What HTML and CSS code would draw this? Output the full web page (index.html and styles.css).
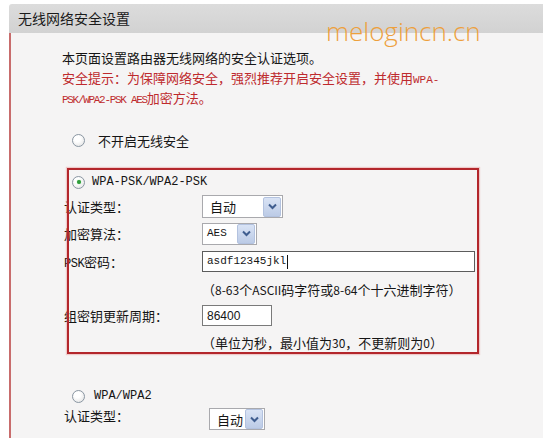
FILE: index.html
```html
<!DOCTYPE html>
<html>
<head>
    <meta charset="utf-8">
    <title>无线网络安全设置</title>
    <link rel="stylesheet" href="styles.css">
</head>
<body>
<div class="page">
    <div class="panel">
        <div class="panel-title">无线网络安全设置</div>
        <div class="panel-body">
            <p class="intro">
                本页面设置路由器无线网络的安全认证选项。<br>
                <span class="warn">安全提示：为保障网络安全，强烈推荐开启安全设置，并使用<span class="en">WPA-</span><br><span class="en narrow">PSK/WPA2-PSK AES</span>加密方法。</span>
            </p>

            <label class="option option-off">
                <span class="radio"></span>
                <span>不开启无线安全</span>
            </label>

            <label class="option option-psk">
                <span class="radio checked"></span>
                <span class="en">WPA-PSK/WPA2-PSK</span>
            </label>

            <div class="form form-psk">
                <div class="label">认证类型：</div>
                <div class="cell">
                    <div class="select select-auth">
                        <span class="value">自动</span>
                        <span class="btn"><svg width="11" height="11" viewBox="0 0 11 11"><polyline points="2,3.5 5.5,7 9,3.5" fill="none" stroke="#3f5d8f" stroke-width="2"/></svg></span>
                    </div>
                </div>

                <div class="label">加密算法：</div>
                <div class="cell">
                    <div class="select select-aes">
                        <span class="value en">AES</span>
                        <span class="btn"><svg width="11" height="11" viewBox="0 0 11 11"><polyline points="2,3.5 5.5,7 9,3.5" fill="none" stroke="#3f5d8f" stroke-width="2"/></svg></span>
                    </div>
                </div>

                <div class="label"><span class="en">PSK</span>密码：</div>
                <div class="cell">
                    <div class="input input-key"><span class="en">asdf12345jkl</span><span class="caret"></span></div>
                </div>

                <div class="label"></div>
                <div class="cell hint">（<span class="num">8-63</span>个<span class="num">ASCII</span>码字符或<span class="num">8-64</span>个十六进制字符）</div>

                <div class="label">组密钥更新周期：</div>
                <div class="cell">
                    <div class="input input-period">86400</div>
                </div>

                <div class="label"></div>
                <div class="cell hint">（单位为秒，最小值为<span class="num">30</span>，不更新则为<span class="num">0</span>）</div>
            </div>

            <label class="option option-wpa">
                <span class="radio"></span>
                <span class="en">WPA/WPA2</span>
            </label>

            <div class="form form-wpa">
                <div class="label">认证类型：</div>
                <div class="cell">
                    <div class="select select-auth2">
                        <span class="value">自动</span>
                        <span class="btn"><svg width="11" height="11" viewBox="0 0 11 11"><polyline points="2,3.5 5.5,7 9,3.5" fill="none" stroke="#3f5d8f" stroke-width="2"/></svg></span>
                    </div>
                </div>
            </div>
        </div>
    </div>

    <!-- annotations drawn over the screenshot -->
    <div class="mark"></div>
    <div class="watermark">melogincn.cn</div>
</div>
</body>
</html>
```

FILE: styles.css
```css
body {
    margin: 0;
    background: #fff;
    font: 13px "Noto Sans CJK SC", sans-serif;
    color: #151515;
}

.page {
    position: relative;
    width: 543px;
    height: 438px;
    overflow: hidden;
    padding-top: 4px;
    box-sizing: border-box;
}

.panel {
    margin-left: 9px;
}

.panel-title {
    height: 29px;
    line-height: 29px;
    padding-left: 9px;
    font-size: 14px;
    color: #1a1a1a;
    background: linear-gradient(#dcdcdc, #d2d2d2);
    border-top-left-radius: 3px;
}

.panel-body {
    height: 420px;
    padding: 15px 0 0 51px;
    background: #f5f4f4;
    border-left: 2px solid #c86c6c;
}

.en {
    font-family: "Liberation Mono", monospace;
    font-size: 11px;
    line-height: 1;
}

.narrow {
    letter-spacing: -1.3px;
}

.intro {
    margin: 0;
    line-height: 20px;
}

.warn {
    color: #be2a2d;
}

/* radio rows */
.option {
    display: flex;
    align-items: center;
    height: 20px;
    padding-left: 10px;
}

.option .en {
    font-size: 12px;
}

.option-off {
    margin-top: 22px;
    gap: 13px;
}

.option-psk {
    margin-top: 22px;
    gap: 7px;
}

.option-wpa {
    margin-top: 31px;
    gap: 9px;
}

.radio {
    position: relative;
    width: 13px;
    height: 13px;
    border: 1px solid #8a96a2;
    border-radius: 50%;
    box-sizing: border-box;
    background: radial-gradient(circle at 40% 35%, #fff 30%, #dedede);
}

.radio.checked::after {
    content: "";
    position: absolute;
    left: 3.5px;
    top: 3.5px;
    width: 4px;
    height: 4px;
    border-radius: 50%;
    background: #2f9c3c;
    box-shadow: 0 0 1px #6c6;
}

/* form grids */
.form {
    display: grid;
    padding-left: 2px;
    align-items: center;
}

.form-psk {
    margin-top: 1px;
    grid-template-columns: 138px 1fr;
    grid-template-rows: 27px 27px 29px 26px 27px 26px;
}

.form-wpa {
    margin-top: 0;
    grid-template-columns: 145px 1fr;
    grid-template-rows: 26px;
}

.form-wpa .label {
    align-self: start;
}

.label .en {
    font-size: 12px;
    letter-spacing: -0.5px;
}

.hint .num {
    font-size: 12px;
}

.select {
    display: flex;
    align-items: center;
    height: 23px;
    background: #fff;
    border: 1px solid #a9a9ad;
    box-sizing: border-box;
}

.select .value {
    flex: 1;
    padding-left: 7px;
}

.select .btn {
    display: flex;
    align-items: center;
    justify-content: center;
    width: 16px;
    height: 18px;
    margin-right: 1px;
    background: linear-gradient(#d9e3f5, #bccbe6);
    border: 1px solid #b3c2df;
    border-radius: 2px;
}

.select-auth {
    width: 81px;
}

.select-aes {
    width: 55px;
    height: 22px;
}

.select-aes .value {
    padding-left: 4px;
}

.select-auth2 {
    width: 56px;
    height: 22px;
}

.input {
    display: flex;
    align-items: center;
    height: 21px;
    padding-left: 4px;
    background: #fff;
    border: 1px solid #5c5c5c;
    box-sizing: border-box;
}

.input-key {
    width: 273px;
}

.caret {
    width: 1px;
    height: 14px;
    margin-left: 1px;
    background: #111;
}

.input-period {
    width: 70px;
    border-color: #7a7a7a;
    font: 12px "Liberation Sans", sans-serif;
}

/* red annotation box and site watermark */
.mark {
    position: absolute;
    left: 67px;
    top: 168px;
    width: 412px;
    height: 186px;
    border: 2px solid #b3262b;
    box-sizing: border-box;
    box-shadow: 0 0 1px 1px rgba(230, 120, 120, 0.35);
}

.watermark {
    position: absolute;
    left: 326px;
    top: 18px;
    font: 300 26px "Open Sans", sans-serif;
    line-height: 1;
    color: #eda03c;
}
```
